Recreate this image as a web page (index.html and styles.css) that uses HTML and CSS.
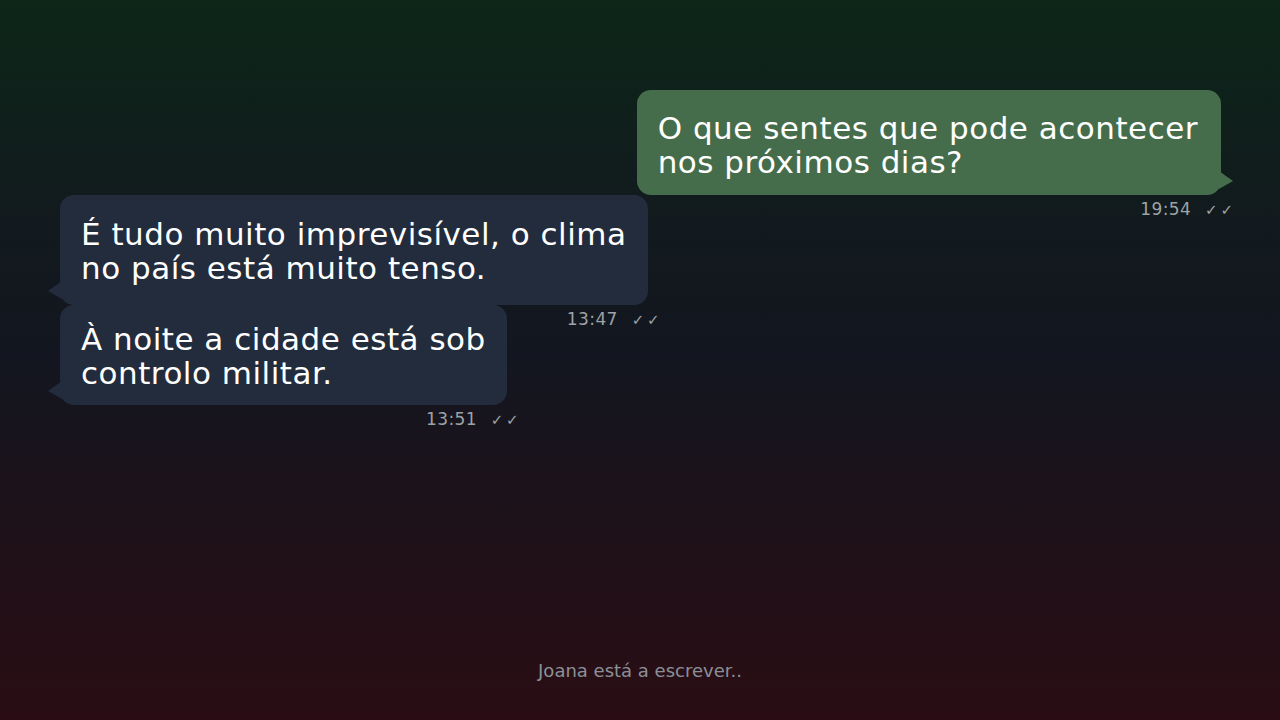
FILE: index.html
```html
<!DOCTYPE html>
<html lang="pt">
<head>
    <meta charset="UTF-8">
    <meta name="viewport" content="width=device-width, initial-scale=1.0">
    <title>Conversa</title>
    <link rel="stylesheet" href="styles.css">
</head>
<body>
    <div class="chat">
        <div class="message sent">
            <div class="bubble">O que sentes que pode acontecer<br>nos próximos dias?</div>
            <span class="meta">19:54 <span class="ticks">✓ ✓</span></span>
        </div>
        <div class="message received">
            <div class="bubble">É tudo muito imprevisível, o clima<br>no país está muito tenso.</div>
            <span class="meta">13:47 <span class="ticks">✓ ✓</span></span>
        </div>
        <div class="message received">
            <div class="bubble">À noite a cidade está sob<br>controlo militar.</div>
            <span class="meta">13:51 <span class="ticks">✓ ✓</span></span>
        </div>
    </div>
    <div class="typing">Joana está a escrever..</div>
</body>
</html>
```

FILE: styles.css
```css
* {
    padding: 0;
    margin: 0;
    box-sizing: border-box;
}

body {
    width: 1280px;
    height: 720px;
    overflow: hidden;
    background: linear-gradient(to bottom, #0c2618 0%, #121a1e 30%, #131620 50%, #1f1119 75%, #2a0d14 100%);
    font-family: 'DejaVu Sans', 'Noto Sans', sans-serif;
    color: #ffffff;
    display: flex;
    flex-direction: column;
}

.chat {
    flex: 1;
    display: flex;
    flex-direction: column;
    padding: 90px 59px 0 60px;
}

.message {
    position: relative;
    width: fit-content;
}

.message.sent {
    align-self: flex-end;
}

.bubble {
    position: relative;
    padding: 21px 23px 16px 21px;
    font-size: 31px;
    line-height: 34px;
    letter-spacing: 0.5px;
    border-radius: 14px;
}

.received .bubble {
    padding: 22px 21px 20px 21px;
}

.received + .received .bubble {
    padding-top: 17px;
    padding-bottom: 15px;
}

.sent .bubble {
    background-color: #466d4b;
}

.received .bubble {
    background-color: #222c3c;
}

.bubble::after {
    content: "";
    position: absolute;
    bottom: 6px;
    width: 14px;
    height: 18px;
}

.sent .bubble::after {
    right: -12px;
    background-color: #466d4b;
    clip-path: polygon(0 0, 100% 55%, 0 100%);
}

.received .bubble::after {
    left: -12px;
    background-color: #222c3c;
    clip-path: polygon(100% 0, 0 55%, 100% 100%);
}

.meta {
    position: absolute;
    top: 100%;
    right: -11px;
    margin-top: 4px;
    font-size: 17px;
    letter-spacing: 0.4px;
    color: #9ea3a6;
    white-space: nowrap;
}

.ticks {
    margin-left: 8px;
    font-size: 15px;
    letter-spacing: -1px;
}

.typing {
    text-align: center;
    font-size: 18px;
    color: #8b9096;
    padding-bottom: 39px;
}
```
